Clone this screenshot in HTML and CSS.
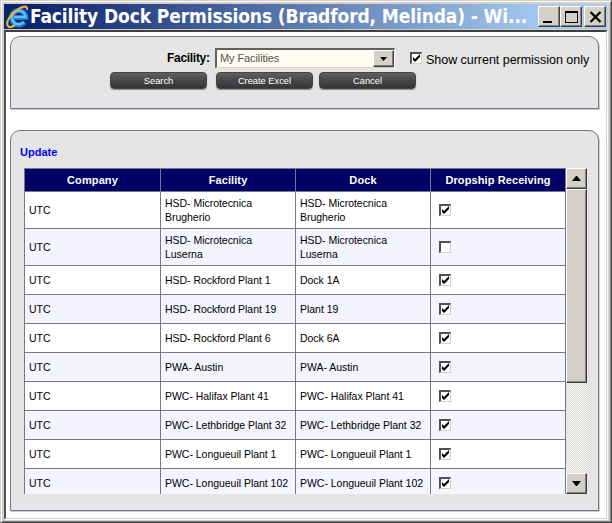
FILE: index.html
```html
<!DOCTYPE html>
<html lang="en">
<head>
<meta charset="utf-8">
<title>Facility Dock Permissions</title>
<link rel="stylesheet" href="styles.css">
</head>
<body>
<div class="window">
  <header class="titlebar">
    <svg class="logo" width="24" height="24" viewBox="0 0 24 24">
      <path d="M19.5 17.2A7.2 7.2 0 1 1 21 12.5H9" fill="none" stroke="#1676cf" stroke-width="5"/>
      <path d="M19 16.8A6.8 6.8 0 1 1 20.5 12H9" fill="none" stroke="#5dc1fa" stroke-width="2.5"/>
      <path d="M22 5C23 0 17 1 12 5C6 9 0 17 3 21C4 23 7 22 10 20" fill="none" stroke="#e9ae3e" stroke-width="2.2"/>
    </svg>
    <h1 class="title"><span>Facility Dock Permissions (Bradford, Melinda) - Wi...</span></h1>
    <div class="controls">
      <button class="raised control" aria-label="Minimize"><svg width="17" height="16"><path d="M2 12h9v2H2z"/></svg></button>
      <button class="raised control" aria-label="Maximize"><svg width="17" height="16"><path fill-rule="evenodd" d="M2 2h13v12H2zM3 4v9h11V4z"/></svg></button>
      <button class="raised control close" aria-label="Close"><svg width="17" height="16"><path d="M3.5 3L13.5 13M13.5 3L3.5 13" stroke="#000" stroke-width="2.2"/></svg></button>
    </div>
  </header>
  <main class="content">
    <section class="panel search">
      <div class="filters">
        <label class="facility-label">Facility:</label>
        <div class="select"><span>My Facilities</span><i class="raised drop"><svg width="7" height="4"><path d="M0 0h7L3.5 4z"/></svg></i></div>
        <span class="check on"><svg width="9" height="9"><path d="M1 3v3l2 2 5-5V0L3 5z"/></svg></span>
        <label class="only">Show current permission only</label>
      </div>
      <div class="actions"><button>Search</button><button>Create Excel</button><button class="cancel">Cancel</button></div>
    </section>
    <section class="panel results">
      <a class="update">Update</a>
      <div class="scroller">
        <div class="viewport">
          <table>
            <thead><tr><th>Company</th><th>Facility</th><th>Dock</th><th>Dropship Receiving</th></tr></thead>
            <tbody id="rows"></tbody>
          </table>
        </div>
        <div class="scrollbar">
          <i class="raised arrow"><svg width="9" height="5"><path d="M4 0h1l4 5H0z"/></svg></i>
          <i class="raised thumb"></i>
          <i class="track"></i>
          <i class="raised arrow"><svg width="9" height="5"><path d="M0 0h9L5 5H4z"/></svg></i>
        </div>
      </div>
    </section>
  </main>
</div>
<script src="rows.js"></script>
</body>
</html>
```
FILE: styles.css
```css
* { box-sizing: border-box; }
body { margin: 0; font-family: "Liberation Sans", Arial, sans-serif; color: #000; overflow: hidden; }
button { font-family: inherit; padding: 0; }
svg { display: block; }
.window {
  width: 612px; height: 523px; padding: 3px 2px 2px 3px; background: #d4d0c8;
  border: 1px solid #d4d0c8; border-right-color: #404040; border-bottom-color: #404040;
  box-shadow: inset 1px 1px #fff, inset -1px -1px #808080;
}
.titlebar {
  height: 25px; width: 603px; display: flex; align-items: center; padding: 0 1px 0 1px;
  background: linear-gradient(90deg, #0a246a 4%, #a6caf0 90%);
}
.logo { width: 24px; flex: none; }
.title { margin: 0 0 0 1px; width: 503px; flex: none; color: #fff; font: bold 19px/27px "DejaVu Sans Condensed", "DejaVu Sans", sans-serif; font-stretch: condensed; white-space: nowrap; letter-spacing: -.12px; }
.controls { display: flex; margin-left: auto; }
.raised {
  background: #d4d0c8; border: 1px solid #fff; border-right-color: #404040; border-bottom-color: #404040;
  box-shadow: inset -1px -1px #808080;
}
.control { width: 22px; height: 21px; display: flex; align-items: center; justify-content: center; border-radius: 0; }
.close { margin-left: 2px; }
.content {
  margin-top: 1px; width: 603px; height: 489px; background: #fff; padding: 4px 6px 0 4px;
  border: 2px solid #404040; border-top-color: #404040; border-left-color: #505058;
  border-right: 1px solid #d4d0c8; border-bottom: 1px solid #d4d0c8;
  box-shadow: 1px 1px #fff;
}
.panel { width: 589px; background: #e5e5e5; border: 1px solid #77778a; border-radius: 10px 10px 0 0; box-shadow: 1px 1px 1px #c8c8cc; }
.search { height: 73px; padding-top: 11px; }
.filters { display: flex; height: 20px; padding-left: 156px; align-items: center; }
.facility-label { width: 48px; flex: none; font-size: 12px; font-weight: bold; white-space: nowrap; letter-spacing: -.3px; }
.select {
  width: 180px; height: 20px; flex: none; background: #fffbee; border: 2px solid #505050; border-top-color: #606060; border-left-color: #606060;
  border-right: 1px solid #fff; border-bottom: 1px solid #d4d0c8; display: flex; justify-content: space-between;
  color: #555; font-size: 11px; line-height: 17px; padding-left: 3px; letter-spacing: -.1px;
}
.drop { width: 21px; height: 17px; display: flex; align-items: center; justify-content: center; }
.check {
  width: 12px; height: 12px; flex: none; background: #fff; display: block; border: 2px solid #505050;
  border-right: 1px solid #d4d0c8; border-bottom: 1px solid #d4d0c8;
}
.filters .check { margin-left: 15px; }
.only { font-size: 12.5px; margin-left: 4px; white-space: nowrap; padding-top: 3px; letter-spacing: -.03px; }
.actions { display: flex; gap: 9px; padding: 4px 0 0 99px; }
.actions button {
  width: 97px; height: 17px; border: 1px solid #444; border-radius: 4px; color: #fff; font-size: 9.3px; line-height: 14px;
  background: linear-gradient(#606062, #47474a 50%, #353537); box-shadow: 0 1px 1px #888;
}
.actions .cancel { margin-left: -3px; }
.results { margin-top: 21px; height: 381px; padding: 0 11px 0 13px; }
.update { display: block; height: 37px; line-height: 43px; margin-left: -4px; color: #0000f5; font-size: 11px; font-weight: bold; }
.scroller { display: flex; height: 326px; }
.viewport { width: 542px; height: 326px; flex: none; overflow: hidden; }
table { width: 542px; border-collapse: collapse; table-layout: fixed; font-size: 10.5px; line-height: 14px; }
th, td { border: 1px solid #77778a; padding: 0 4px; text-align: left; }
td { letter-spacing: -.03px; }
th { height: 23px; background: #000066; color: #fff; text-align: center; font-size: 11px; letter-spacing: .1px; }
td { height: 29px; background: #fff; }
tbody tr:nth-child(even) td { background: #f4f4ff; }
tbody tr:nth-child(-n+2) td { height: 37px; }
td .check { margin-left: 4px; }
th:nth-child(1) { width: 136px; }
.scrollbar { width: 21px; height: 326px; flex: none; display: flex; flex-direction: column; }
.arrow { height: 21px; display: flex; align-items: center; justify-content: center; }
.thumb { height: 194px; }
.track { flex: 1; background: repeating-conic-gradient(#fff 0 25%, #d4d0c8 0 50%) 0 0 / 2px 2px; }
```
FILE: rows.js
```js
const rows = [
  ["HSD- Microtecnica Brugherio", "HSD- Microtecnica Brugherio", true],
  ["HSD- Microtecnica Luserna", "HSD- Microtecnica Luserna", false],
  ["HSD- Rockford Plant 1", "Dock 1A", true],
  ["HSD- Rockford Plant 19", "Plant 19", true],
  ["HSD- Rockford Plant 6", "Dock 6A", true],
  ["PWA- Austin", "PWA- Austin", true],
  ["PWC- Halifax Plant 41", "PWC- Halifax Plant 41", true],
  ["PWC- Lethbridge Plant 32", "PWC- Lethbridge Plant 32", true],
  ["PWC- Longueuil Plant 1", "PWC- Longueuil Plant 1", true],
  ["PWC- Longueuil Plant 102", "PWC- Longueuil Plant 102", true]
];
const tick = '<svg width="9" height="9"><path d="M1 3v3l2 2 5-5V0L3 5z"/></svg>';
document.getElementById("rows").innerHTML = rows.map(([facility, dock, checked]) =>
  `<tr><td>UTC</td><td>${facility}</td><td>${dock}</td><td><span class="check">${checked ? tick : ""}</span></td></tr>`
).join("");
```
